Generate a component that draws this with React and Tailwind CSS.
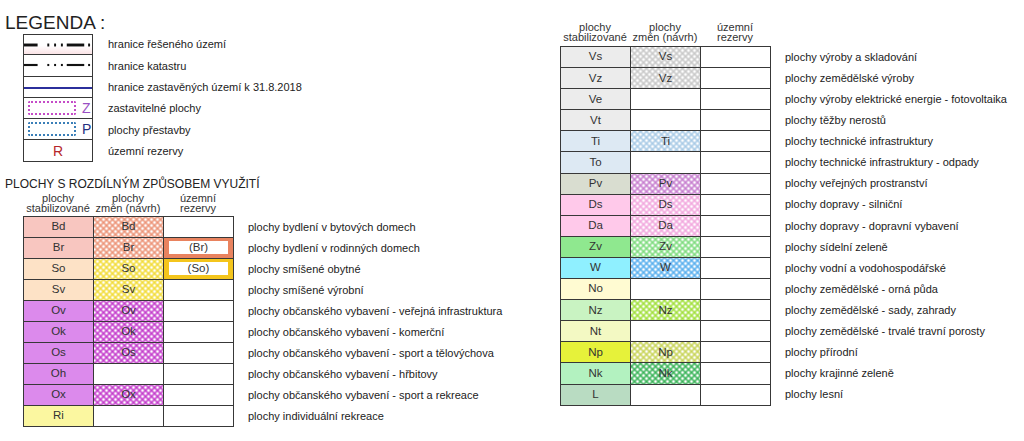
import React from 'react';

const DOTS =
  'bg-[radial-gradient(circle,#ffffff_1.2px,transparent_1.8px),radial-gradient(circle,#ffffff_1.2px,transparent_1.8px)] bg-[length:6px_6px] bg-[position:0_0,3px_3px]';

const leftRows = [
  { code: 'Bd', stab: 'bg-[#f8c6c0]', prop: 'bg-[#ec9478]', label: 'plochy bydlení v bytových domech' },
  { code: 'Br', stab: 'bg-[#f8c6c0]', prop: 'bg-[#ec9478]', res: 'Br', resBg: 'bg-[#e9835f]', label: 'plochy bydlení v rodinných domech' },
  { code: 'So', stab: 'bg-[#fde2c6]', prop: 'bg-[#f2dc3a]', res: 'So', resBg: 'bg-[#f4c51c]', label: 'plochy smíšené obytné' },
  { code: 'Sv', stab: 'bg-[#fde2c6]', prop: 'bg-[#f2dc3a]', label: 'plochy smíšené výrobní' },
  { code: 'Ov', stab: 'bg-[#dc8aec]', prop: 'bg-[#c43dcc]', label: 'plochy občanského vybavení - veřejná infrastruktura' },
  { code: 'Ok', stab: 'bg-[#dc8aec]', prop: 'bg-[#c43dcc]', label: 'plochy občanského vybavení - komerční' },
  { code: 'Os', stab: 'bg-[#dc8aec]', prop: 'bg-[#c43dcc]', label: 'plochy občanského vybavení - sport a tělovýchova' },
  { code: 'Oh', stab: 'bg-[#dc8aec]', label: 'plochy občanského vybavení - hřbitovy' },
  { code: 'Ox', stab: 'bg-[#dc8aec]', prop: 'bg-[#c43dcc]', label: 'plochy občanského vybavení - sport a rekreace' },
  { code: 'Ri', stab: 'bg-[#fbf7a0]', label: 'plochy individuální rekreace' },
];

const rightRows = [
  { code: 'Vs', stab: 'bg-[#ececec]', prop: 'bg-[#c9c9c9]', label: 'plochy výroby a skladování' },
  { code: 'Vz', stab: 'bg-[#ececec]', prop: 'bg-[#c9c9c9]', label: 'plochy zemědělské výroby' },
  { code: 'Ve', stab: 'bg-[#ececec]', label: 'plochy výroby elektrické energie - fotovoltaika' },
  { code: 'Vt', stab: 'bg-[#ececec]', label: 'plochy těžby nerostů' },
  { code: 'Ti', stab: 'bg-[#dde9f3]', prop: 'bg-[#a9cbe6]', label: 'plochy technické infrastruktury' },
  { code: 'To', stab: 'bg-[#dde9f3]', label: 'plochy technické infrastruktury - odpady' },
  { code: 'Pv', stab: 'bg-[#d9ddd0]', prop: 'bg-[#c77fcf]', label: 'plochy veřejných prostranství' },
  { code: 'Ds', stab: 'bg-[#ffc9ea]', prop: 'bg-[#f2a8de]', label: 'plochy dopravy - silniční' },
  { code: 'Da', stab: 'bg-[#ffc9ea]', prop: 'bg-[#f2a8de]', label: 'plochy dopravy - dopravní vybavení' },
  { code: 'Zv', stab: 'bg-[#8fe88f]', prop: 'bg-[#7fdc7f]', label: 'plochy sídelní zeleně' },
  { code: 'W', stab: 'bg-[#8ff0ff]', prop: 'bg-[#5ab0ee]', label: 'plochy vodní a vodohospodářské' },
  { code: 'No', stab: 'bg-[#fffbd2]', label: 'plochy zemědělské - orná půda' },
  { code: 'Nz', stab: 'bg-[#c9f3c2]', prop: 'bg-[#a2e03e]', label: 'plochy zemědělské - sady, zahrady' },
  { code: 'Nt', stab: 'bg-[#f3f9c3]', label: 'plochy zemědělské - trvalé travní porosty' },
  { code: 'Np', stab: 'bg-[#e6f23a]', prop: 'bg-[#c8d45a]', label: 'plochy přírodní' },
  { code: 'Nk', stab: 'bg-[#b3f2c0]', prop: 'bg-[#3bb45a]', label: 'plochy krajinné zeleně' },
  { code: 'L', stab: 'bg-[#b9dcc2]', label: 'plochy lesní' },
];

const cell = 'w-[70px] border-[1.5px] border-[#383838] p-0 text-center align-middle';

function HeaderCols() {
  return (
    <div className="flex text-[11px] leading-[10px] text-[#333] text-center">
      <div className="w-[70px]">plochy<br />stabilizované</div>
      <div className="w-[70px]">plochy<br />změn (návrh)</div>
      <div className="w-[70px]">územní<br />rezervy</div>
    </div>
  );
}

function LandTable({ rows, rowH }) {
  return (
    <table className="border-collapse text-[11.5px] text-[#333]">
      <tbody>
        {rows.map((r) => (
          <tr key={r.code} className={rowH}>
            <td className={`${cell} ${r.stab}`}>{r.code}</td>
            <td className={`${cell} ${r.prop ? `${DOTS} ${r.prop}` : 'bg-white'}`}>{r.prop ? r.code : ''}</td>
            <td className={`${cell} ${r.res ? r.resBg : 'bg-white'}`}>
              {r.res && (
                <div className="mx-[5px] bg-white leading-[13px]">({r.res})</div>
              )}
            </td>
            <td className="pl-[14px] text-[11px] text-[#222] whitespace-nowrap">{r.label}</td>
          </tr>
        ))}
      </tbody>
    </table>
  );
}

function DashLine({ w }) {
  return (
    <svg width="70" height="6" viewBox="0 0 70 6">
      <g stroke="#111" strokeWidth={w} strokeLinecap="butt">
        <line x1="0" y1="3" x2="14" y2="3" />
        <line x1="24" y1="3" x2="26" y2="3" />
        <line x1="31" y1="3" x2="33" y2="3" />
        <line x1="38" y1="3" x2="40" y2="3" />
        <line x1="44" y1="3" x2="62" y2="3" />
        <line x1="66" y1="3" x2="68" y2="3" />
      </g>
    </svg>
  );
}

const legend = [
  { label: 'hranice řešeného území', sym: <DashLine w={3} /> },
  { label: 'hranice katastru', sym: <DashLine w={2.2} /> },
  { label: 'hranice zastavěných území k 31.8.2018', sym: <div className="mt-[2px] h-[2px] w-full bg-[#2b2f9c]" /> },
  {
    label: 'zastavitelné plochy',
    sym: (
      <div className="flex w-full items-center pl-[4px]">
        <div className="h-[14px] w-[48px] rounded-[2px] border-2 border-dotted border-[#c54cc8]" />
        <span className="ml-[6px] text-[14px] leading-none text-[#9a4fc4]">Z</span>
      </div>
    ),
  },
  {
    label: 'plochy přestavby',
    sym: (
      <div className="flex w-full items-center pl-[4px]">
        <div className="h-[14px] w-[48px] rounded-[2px] border-2 border-dotted border-[#3a7fb8]" />
        <span className="ml-[6px] text-[14px] leading-none text-[#25307f]">P</span>
      </div>
    ),
  },
  { label: 'územní rezervy', sym: <span className="text-[14px] leading-none text-[#b5262a]">R</span> },
];

export default function App() {
  return (
    <div className="flex h-[441px] w-[1024px] bg-white font-['Liberation_Sans',Arial,sans-serif] text-[#222]">
      {/* left column */}
      <div className="w-[560px] pl-[5px] pt-[12px]">
        <div className="text-[19px] leading-[21px] text-[#222]">LEGENDA :</div>
        <div className="ml-[18px] mt-[1px]">
          {legend.map((l, i) => (
            <div key={i} className="flex h-[21.3px] items-center">
              <div
                className={`flex h-full w-[70px] items-center justify-center border-x-[1.5px] border-b-[1.5px] border-[#383838] ${i === 0 ? 'border-t-[1.5px] bg-[linear-gradient(#fff_55%,#fbe3e6)]' : ''}`}
              >
                {l.sym}
              </div>
              <span className="pl-[15px] text-[11px] text-[#222]">{l.label}</span>
            </div>
          ))}
        </div>
        <div className="mt-[16px] text-[12px] leading-[12px] text-[#222]">PLOCHY S ROZDÍLNÝM ZPŮSOBEM VYUŽITÍ</div>
        <div className="ml-[18px] mt-[3px]">
          <HeaderCols />
          <div className="mt-[3px]">
            <LandTable rows={leftRows} rowH="h-[21px]" />
          </div>
        </div>
      </div>

      {/* right column */}
      <div className="pt-[22px]">
        <HeaderCols />
        <div className="mt-[4px]">
          <LandTable rows={rightRows} rowH="h-[21.1px]" />
        </div>
      </div>
    </div>
  );
}
